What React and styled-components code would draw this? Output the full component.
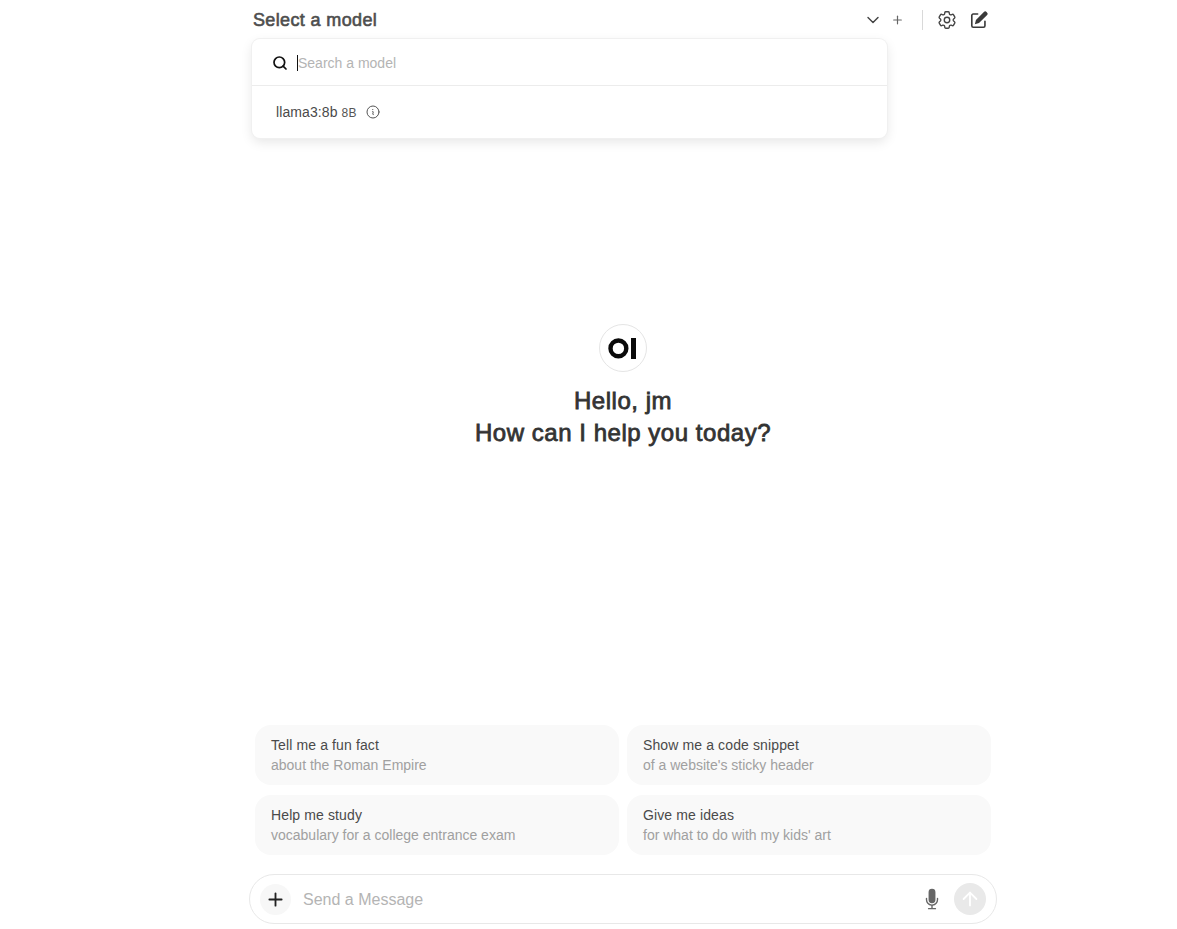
import styled, { createGlobalStyle } from "styled-components";
import { ChevronDown, Plus, Search, ArrowUp } from "lucide-react";
import { HiOutlineCog6Tooth, HiOutlineInformationCircle, HiMicrophone } from "react-icons/hi2";

const suggestions = [
  { title: "Tell me a fun fact", sub: "about the Roman Empire" },
  { title: "Show me a code snippet", sub: "of a website's sticky header" },
  { title: "Help me study", sub: "vocabulary for a college entrance exam" },
  { title: "Give me ideas", sub: "for what to do with my kids' art" },
];

function NewChatIcon() {
  return (
    <svg width="18" height="18" viewBox="0 0 20 20" fill="none">
      <path d="M8.5 3.4H3.6A1.6 1.6 0 0 0 2 5v11.4A1.6 1.6 0 0 0 3.6 18H15a1.6 1.6 0 0 0 1.6-1.6v-5" stroke="#3a3a3a" strokeWidth="1.8" strokeLinecap="round" />
      <path d="M15.4 1.2a2 2 0 0 1 3 0l.4.4a2 2 0 0 1 0 3l-8.8 8.8-4.6 1.2 1.2-4.6z" fill="#3a3a3a" />
    </svg>
  );
}

function App() {
  return (
    <Page>
      <GlobalStyle />
      <Navbar>
        <ModelTitle>Select a model</ModelTitle>
        <ChevronDown size={20} color="#444" strokeWidth={1.7} />
        <AddButton>
          <Plus size={16} color="#666" strokeWidth={2.2} />
        </AddButton>
        <Divider />
        <IconSlot>
          <HiOutlineCog6Tooth size={22} color="#444" />
        </IconSlot>
        <IconSlot>
          <NewChatIcon />
        </IconSlot>
        <Dropdown>
          <SearchRow>
            <Search size={16} color="#111" strokeWidth={2.6} />
            <Caret />
            <SearchInput placeholder="Search a model" readOnly />
          </SearchRow>
          <ModelRow>
            <ModelName>llama3:8b</ModelName>
            <ModelSize>8B</ModelSize>
            <HiOutlineInformationCircle size={16} color="#555" />
          </ModelRow>
        </Dropdown>
      </Navbar>

      <Hero>
        <LogoCircle>
          <svg width="30" height="22" viewBox="0 0 30 22" fill="none">
            <circle cx="10.4" cy="11.4" r="7.9" stroke="#0a0a0a" strokeWidth="4.4" />
            <rect x="23" y="1" width="5" height="21" fill="#0a0a0a" />
          </svg>
        </LogoCircle>
        <Greeting>
          Hello, jm
          <br />
          How can I help you today?
        </Greeting>
      </Hero>

      <SuggestionGrid>
        {suggestions.map((s) => (
          <SuggestionCard key={s.title}>
            <CardTitle>{s.title}</CardTitle>
            <CardSub>{s.sub}</CardSub>
          </SuggestionCard>
        ))}
      </SuggestionGrid>

      <Composer>
        <AttachButton>
          <Plus size={21} color="#222" strokeWidth={2.1} />
        </AttachButton>
        <MessageInput placeholder="Send a Message" readOnly />
        <MicSlot>
          <HiMicrophone size={22} color="#666" />
        </MicSlot>
        <SendButton>
          <ArrowUp size={22} color="#fff" strokeWidth={2} />
        </SendButton>
      </Composer>
    </Page>
  );
}

const GlobalStyle = createGlobalStyle`
  html, body {
    margin: 0;
    background: #fff;
    font-family: "Liberation Sans", Arial, sans-serif;
  }
  input::placeholder {
    color: #b4b4b4;
    opacity: 1;
  }
`;

const Page = styled.div`
  height: 100vh;
  box-sizing: border-box;
  padding: 0 0 5px 69px;
  display: flex;
  flex-direction: column;
  align-items: center;
  overflow: hidden;
`;

const Navbar = styled.header`
  position: relative;
  width: 746px;
  height: 40px;
  flex: none;
  display: flex;
  align-items: center;
  padding: 0 1px 0 3px;
  box-sizing: border-box;
`;

const ModelTitle = styled.div`
  flex: 1;
  font-size: 18px;
  font-weight: 400;
  letter-spacing: 0.36px;
  -webkit-text-stroke: 0.6px #4e4e4e;
  color: #4e4e4e;
`;

const AddButton = styled.div`
  width: 13px;
  height: 13px;
  margin-left: 8px;
  display: flex;
  align-items: center;
  justify-content: center;
`;

const Divider = styled.div`
  width: 1px;
  height: 20px;
  background: #d9d9d9;
  margin: 0 8px 0 18px;
`;

const IconSlot = styled.div`
  width: 32px;
  height: 32px;
  display: flex;
  align-items: center;
  justify-content: center;
`;

const Dropdown = styled.div`
  position: absolute;
  top: 39px;
  left: 2px;
  width: 635px;
  height: 99px;
  box-sizing: border-box;
  background: #fff;
  border-radius: 8px;
  box-shadow: 0 0 0 1px #f0f0f0, 0 4px 12px rgba(0, 0, 0, 0.1);
  z-index: 10;
`;

const SearchRow = styled.div`
  height: 47px;
  box-sizing: border-box;
  display: flex;
  align-items: center;
  padding: 1px 0 0 20px;
  border-bottom: 1px solid #ececec;
`;

const Caret = styled.span`
  width: 1px;
  height: 16px;
  margin-left: 9px;
  background: #111;
`;

const SearchInput = styled.input`
  flex: 1;
  border: 0;
  outline: 0;
  padding: 0;
  font-family: inherit;
  font-size: 14px;
  background: transparent;
`;

const ModelRow = styled.div`
  height: 52px;
  display: flex;
  align-items: center;
  padding-left: 24px;
`;

const ModelName = styled.span`
  font-size: 14px;
  letter-spacing: 0.1px;
  color: #4a4a4a;
`;

const ModelSize = styled.span`
  font-size: 12px;
  letter-spacing: 0.3px;
  color: #555;
  margin: 1px 8px 0 4px;
`;

const Hero = styled.main`
  flex: 1;
  display: flex;
  flex-direction: column;
  align-items: center;
  justify-content: center;
  padding-top: 7px;
`;

const LogoCircle = styled.div`
  width: 48px;
  height: 48px;
  box-sizing: border-box;
  border: 1px solid #e5e5e5;
  border-radius: 50%;
  display: flex;
  align-items: center;
  justify-content: center;
`;

const Greeting = styled.h1`
  margin: 13px 0 0;
  font-size: 24px;
  line-height: 32px;
  font-weight: 400;
  letter-spacing: 0.53px;
  -webkit-text-stroke: 0.8px #333;
  color: #333;
  text-align: center;
`;

const SuggestionGrid = styled.div`
  width: 736px;
  flex: none;
  display: grid;
  grid-template-columns: repeat(2, 364px);
  gap: 10px 8px;
`;

const SuggestionCard = styled.div`
  height: 60px;
  box-sizing: border-box;
  padding: 10px 16px;
  background: #f9f9f9;
  border-radius: 16px;
  font-size: 14px;
  line-height: 20px;
`;

const CardTitle = styled.div`
  letter-spacing: 0.12px;
  color: #4a4a4a;
`;

const CardSub = styled.div`
  color: #a0a0a0;
`;

const Composer = styled.div`
  width: 748px;
  height: 50px;
  flex: none;
  margin-top: 19px;
  box-sizing: border-box;
  border: 1px solid #e8e8e8;
  border-radius: 25px;
  display: flex;
  align-items: center;
  padding: 0 10px;
`;

const AttachButton = styled.div`
  width: 31px;
  height: 31px;
  flex: none;
  border-radius: 50%;
  background: #f7f7f7;
  display: flex;
  align-items: center;
  justify-content: center;
`;

const MessageInput = styled.input`
  flex: 1;
  min-width: 0;
  margin-left: 12px;
  border: 0;
  outline: 0;
  padding: 1px 0 0;
  font-family: inherit;
  font-size: 16px;
  background: transparent;
`;

const MicSlot = styled.div`
  width: 22px;
  display: flex;
  justify-content: center;
  margin-right: 11px;
`;

const SendButton = styled.div`
  width: 32px;
  height: 32px;
  flex: none;
  border-radius: 50%;
  background: #e9e9e9;
  display: flex;
  align-items: center;
  justify-content: center;
`;

export default App;
